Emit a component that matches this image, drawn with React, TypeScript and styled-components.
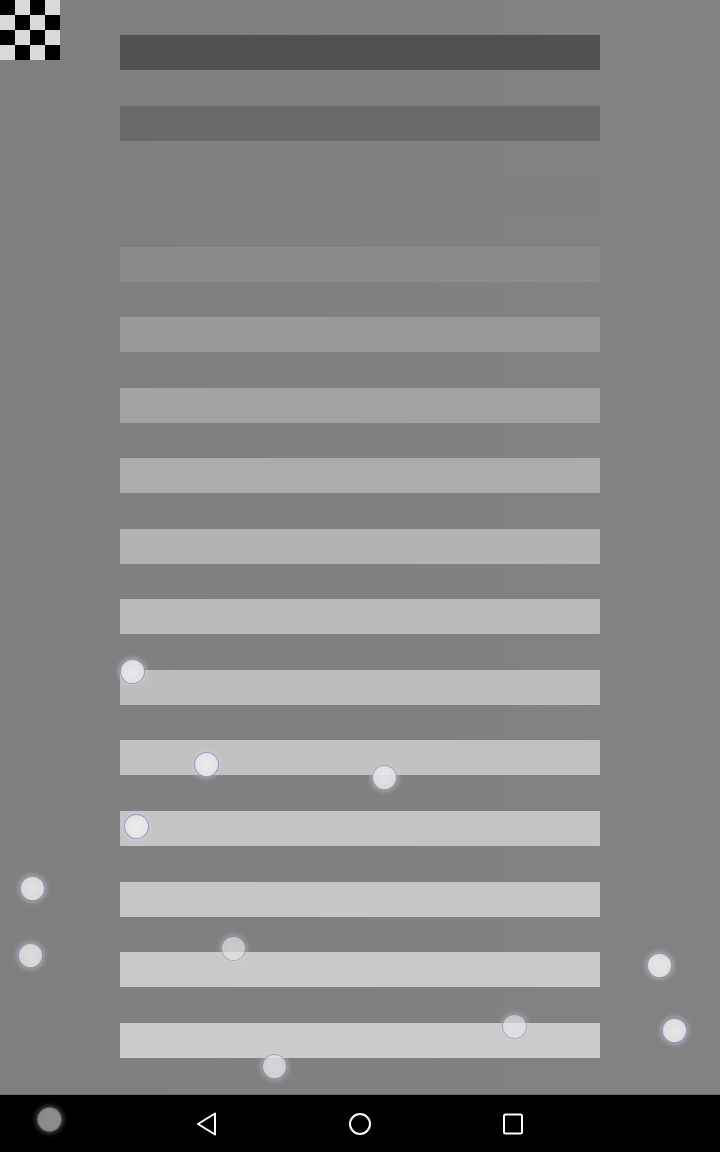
import React from "react";
import styled, { createGlobalStyle } from "styled-components";

const GlobalStyle = createGlobalStyle`
  html, body {
    margin: 0;
    padding: 0;
    background: #808080;
    font-family: "Roboto", "Liberation Sans", sans-serif;
  }
`;

const Screen = styled.div`
  position: relative;
  width: 720px;
  height: 1152px;
  overflow: hidden;
  display: flex;
  flex-direction: column;
  background: linear-gradient(to right, #7f7f7f, #828282);
`;

const Content = styled.main`
  flex: 1;
  display: flex;
  flex-direction: column;
  gap: 35.55px;
  padding: 35px 0 0 120px;
`;

const Bar = styled.div<{ $shade: string }>`
  width: 480px;
  height: 35px;
  background: ${({ $shade }) => $shade};
`;

const Checker = styled.div`
  position: absolute;
  top: 0;
  left: 0;
  width: 60px;
  height: 60px;
  display: grid;
  grid-template-columns: repeat(4, 15px);
  grid-template-rows: repeat(4, 15px);
`;

const Cell = styled.div<{ $dark: boolean }>`
  background: ${({ $dark }) => ($dark ? "#000" : "#d9d9d9")};
`;

const NavBar = styled.nav`
  height: 58px;
  flex-shrink: 0;
  background: #000;
  border-top: 1px solid #6a6a6a;
  display: flex;
  align-items: center;
  justify-content: center;
  gap: 127px;
  box-sizing: border-box;
`;

const NavButton = styled.div`
  width: 26px;
  height: 26px;
  display: flex;
  align-items: center;
  justify-content: center;
`;

const Touch = styled.div<{ $fade: number }>`
  position: absolute;
  width: 25px;
  height: 25px;
  margin: -12.5px 0 0 -12.5px;
  border-radius: 50%;
  background: radial-gradient(circle, #ececec 0%, #e4e4e4 70%, #d8d8dc 100%);
  border: 1px solid rgba(140, 140, 180, 0.85);
  box-shadow: 0 0 4px 2px rgba(210, 210, 235, 0.45);
  box-sizing: border-box;
  opacity: ${({ $fade }) => $fade};
`;

const shades = [
  "#515151",
  "#6a6a6a",
  "#808080",
  "#8b8b8b",
  "#999999",
  "#a3a3a3",
  "#acacac",
  "#b3b3b3",
  "#b9b9b9",
  "#bdbdbd",
  "#c1c1c1",
  "#c4c4c4",
  "#c6c6c6",
  "#c9c9c9",
  "#cbcbcb",
];

const touches = [
  { x: 132, y: 671, f: 0.95 },
  { x: 206, y: 764, f: 1 },
  { x: 384, y: 777, f: 0.9 },
  { x: 136, y: 826, f: 1 },
  { x: 32, y: 888, f: 0.9 },
  { x: 30, y: 955, f: 0.85 },
  { x: 233, y: 948, f: 0.7 },
  { x: 659, y: 965, f: 0.95 },
  { x: 674, y: 1030, f: 0.95 },
  { x: 514, y: 1026, f: 0.7 },
  { x: 274, y: 1066, f: 0.8 },
  { x: 49, y: 1119, f: 0.6 },
];

export default function App() {
  return (
    <>
      <GlobalStyle />
      <Screen>
        <Content>
          {shades.map((s, i) => (
            <Bar key={i} $shade={s} />
          ))}
        </Content>
        <NavBar>
          <NavButton>
            <svg width="26" height="26" viewBox="0 0 26 26">
              <path d="M21 2.5 L4 13 L21 23.5 Z" fill="none" stroke="#fff" strokeWidth="2" strokeLinejoin="round" />
            </svg>
          </NavButton>
          <NavButton>
            <svg width="26" height="26" viewBox="0 0 26 26">
              <circle cx="13" cy="13" r="10" fill="none" stroke="#fff" strokeWidth="2" />
            </svg>
          </NavButton>
          <NavButton>
            <svg width="26" height="26" viewBox="0 0 26 26">
              <rect x="4" y="3.5" width="18" height="19" rx="1.5" fill="none" stroke="#fff" strokeWidth="2" />
            </svg>
          </NavButton>
        </NavBar>
        <Checker>
          {Array.from({ length: 16 }).map((_, i) => (
            <Cell key={i} $dark={(Math.floor(i / 4) + (i % 4)) % 2 === 0} />
          ))}
        </Checker>
        {touches.map((t, i) => (
          <Touch key={i} $fade={t.f} style={{ left: t.x, top: t.y }} />
        ))}
      </Screen>
    </>
  );
}
